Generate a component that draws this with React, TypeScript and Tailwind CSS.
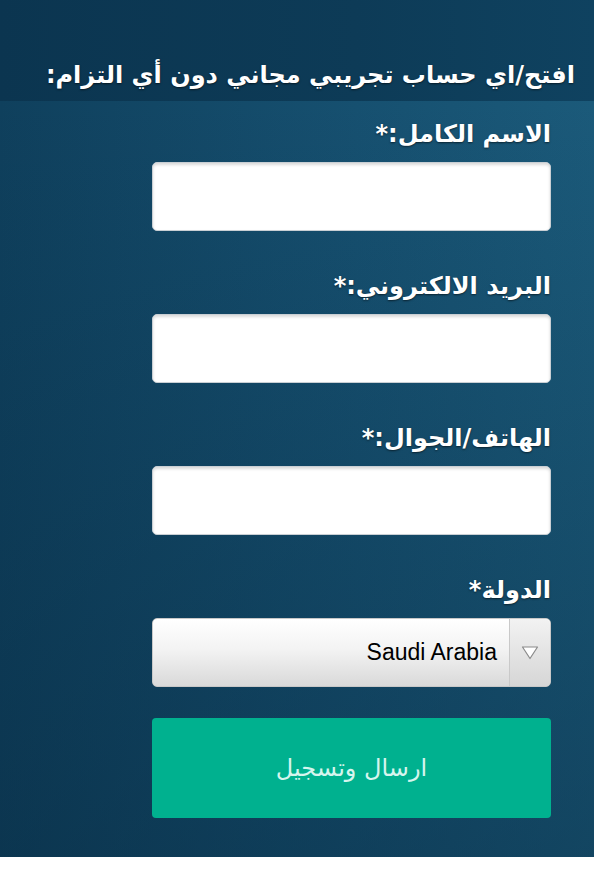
import React from "react";

const labelCls = "text-white font-bold text-[24px] leading-[36px] [text-shadow:0_1px_2px_rgba(0,0,0,0.55)]";

function Field({ label }: { label: string }) {
  return (
    <div className="flex flex-col">
      <div className={labelCls}>{label}</div>
      <div className="mt-[10px] h-[69px] w-[399px] rounded-[5px] bg-white border border-[#c9cfd4] shadow-[inset_0_2px_3px_rgba(0,0,0,0.15)]" />
    </div>
  );
}

export default function App() {
  return (
    <div className="w-[594px] h-[871px] bg-white" style={{ fontFamily: '"DejaVu Sans", sans-serif' }}>
      <div dir="rtl" className="h-[857px] bg-[linear-gradient(to_right,#0f405d,#165070_60%,#1b5a7a)] flex flex-col">
        <div className="h-[101px] bg-[linear-gradient(to_right,#0b3550,#0d3b57_60%,#0f4260)] flex items-end pr-[19px] pb-[8px]">
          <div className="text-white font-bold text-[24px] leading-[36px] [text-shadow:0_1px_2px_rgba(0,0,0,0.55)] whitespace-nowrap">
            افتح/اي حساب تجريبي مجاني دون أي التزام:
          </div>
        </div>
        <div className="flex-1 bg-[linear-gradient(to_bottom,rgba(0,0,0,0),rgba(6,38,60,0.4))] pr-[43px] pt-[15px] flex flex-col gap-[37px]">
          <Field label="الاسم الكامل:*" />
          <Field label="البريد الالكتروني:*" />
          <Field label="الهاتف/الجوال:*" />
          <div className="flex flex-col">
            <div className={labelCls}>الدولة*</div>
            <div className="mt-[10px] h-[69px] w-[399px] rounded-[5px] bg-[linear-gradient(to_bottom,#ffffff,#f3f3f3_45%,#d9d9d9)] border border-[#c8c8c8] flex items-stretch">
              <div className="w-[41px] border-l border-[#c9c9c9] bg-[linear-gradient(to_bottom,#f2f2f2,#d6d6d6)] rounded-r-[5px] flex items-center justify-center">
                <svg width="18" height="15" viewBox="0 0 18 15">
                  <path d="M1.5 2 L16.5 2 L9 13.5 Z" fill="#ffffff" stroke="#8a8a8a" strokeWidth="1.2" strokeLinejoin="round" />
                </svg>
              </div>
              <div dir="ltr" className="flex-1 flex items-center justify-end pr-[12px] text-[23px] text-black" style={{ fontFamily: '"Liberation Sans", Arial, sans-serif' }}>
                Saudi Arabia
              </div>
            </div>
          </div>
          <div className="-mt-[6px] h-[100px] w-[399px] rounded-[4px] bg-[#00b18f] flex items-center justify-center text-[#d6f5ee] text-[24px]">
            ارسال وتسجيل
          </div>
        </div>
      </div>
    </div>
  );
}
